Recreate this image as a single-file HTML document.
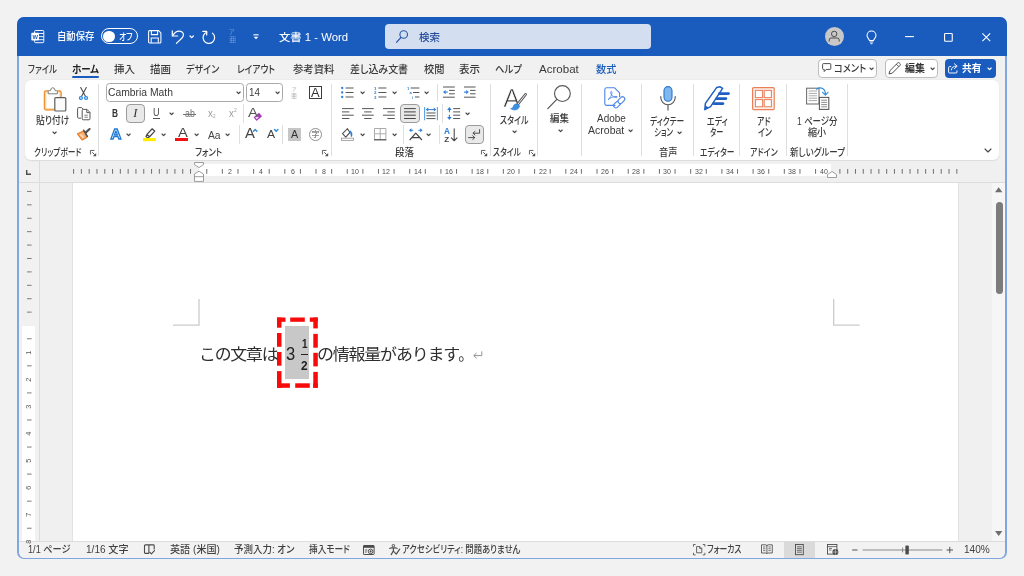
<!DOCTYPE html><html lang="ja"><head><meta charset="utf-8"><title>文書 1 - Word</title><style>
html,body{margin:0;padding:0}
body{width:1024px;height:576px;overflow:hidden;background:#f2f2f2;position:relative;font-family:"Liberation Sans","Noto Sans CJK JP",sans-serif;}
.t{position:absolute;white-space:nowrap;transform-origin:0 50%;font-feature-settings:"palt";line-height:1;z-index:3;}
svg{overflow:visible}
</style></head><body>
<div style="position:absolute;left:17.4px;top:17px;width:989.2px;height:542px;border-radius:7px;overflow:hidden;background:#82a6df;"><div style="position:absolute;left:-17.4px;top:-17px;width:1024px;height:576px;will-change:transform;">
<div style="position:absolute;left:18.6px;top:55px;width:986.8px;height:502.8px;background:#f1f1f1;border-radius:0 0 6px 6px;"></div>
<div style="position:absolute;left:17px;top:17px;width:990px;height:38.5px;background:#1a5cbe;"></div>
<div style="position:absolute;left:385.2px;top:24.3px;width:265.5px;height:25px;background:#d3dff1;border-radius:4px;"></div>
<div style="position:absolute;left:25px;top:80.4px;width:973.5px;height:79.9px;background:#fff;border-radius:6px;box-shadow:0 0.5px 1.5px rgba(0,0,0,0.10);"></div>
<div style="position:absolute;left:39.4px;top:160.6px;width:966px;height:381px;background:#f0f0f0;"></div>
<div style="position:absolute;left:198.8px;top:164px;width:632.4px;height:12.3px;background:#fff;"></div>
<div style="position:absolute;left:18.6px;top:181.9px;width:986.8px;height:1px;background:#dcdcdc;"></div>
<div style="position:absolute;left:73.2px;top:182.9px;width:885.3px;height:359px;background:#fff;box-shadow:0 0 0 0.8px #dedede;"></div>
<div style="position:absolute;left:21.6px;top:326px;width:13px;height:215px;background:#fff;"></div>
<div style="position:absolute;left:39px;top:161px;width:1px;height:380px;background:#dcdcdc;"></div>
<div style="position:absolute;left:992px;top:182.9px;width:13.4px;height:359px;background:#f6f6f6;"></div>
<div style="position:absolute;left:995.6px;top:202.2px;width:7px;height:91.8px;background:#7c7c7c;border-radius:3.5px;"></div>
<svg style="position:absolute;left:995.1px;top:186.6px;" width="7.4" height="5.2" viewBox="0 0 7.4 5.2" fill="none"><path d="M0 5.2 L3.7 0.3 L7.4 5.2 Z" fill="#6e6e6e"/></svg>
<svg style="position:absolute;left:995.1px;top:531.4px;" width="7.4" height="5.2" viewBox="0 0 7.4 5.2" fill="none"><path d="M0 0 L3.7 4.9 L7.4 0 Z" fill="#6e6e6e"/></svg>
<div style="position:absolute;left:18.6px;top:541px;width:986.8px;height:16.8px;background:#f2f2f2;border-top:1px solid #dcdcdc;border-radius:0 0 6px 6px;box-sizing:border-box;"></div>
<div style="position:absolute;left:783.8px;top:541.8px;width:31.6px;height:16px;background:#dadada;"></div>
<span class="t" style="left:57.3px;top:32.10px;font-size:10.2px;color:#ffffff;font-weight:500;transform:scaleX(0.9202);">自動保存</span>
<span class="t" style="left:119px;top:32.25px;font-size:9.5px;color:#ffffff;font-weight:500;transform:scaleX(0.8090);">オフ</span>
<span class="t" style="left:278.6px;top:32.05px;font-size:10.5px;color:#ffffff;font-weight:500;transform:scaleX(1.0800);">文書 1 - Word</span>
<span class="t" style="left:419px;top:32.05px;font-size:10.5px;color:#23499a;font-weight:500;">検索</span>
<span class="t" style="left:27.8px;top:64.15px;font-size:10.5px;color:#3a3a3a;font-weight:500;transform:scaleX(0.7945);">ファイル</span>
<span class="t" style="left:113.6px;top:64.15px;font-size:10.5px;color:#3a3a3a;font-weight:500;transform:scaleX(0.9952);">挿入</span>
<span class="t" style="left:149.7px;top:64.15px;font-size:10.5px;color:#3a3a3a;font-weight:500;transform:scaleX(0.9952);">描画</span>
<span class="t" style="left:186.3px;top:64.15px;font-size:10.5px;color:#3a3a3a;font-weight:500;transform:scaleX(0.8627);">デザイン</span>
<span class="t" style="left:236.9px;top:64.15px;font-size:10.5px;color:#3a3a3a;font-weight:500;transform:scaleX(0.8292);">レイアウト</span>
<span class="t" style="left:293.2px;top:64.15px;font-size:10.5px;color:#3a3a3a;font-weight:500;transform:scaleX(0.9857);">参考資料</span>
<span class="t" style="left:349.9px;top:64.15px;font-size:10.5px;color:#3a3a3a;font-weight:500;transform:scaleX(0.9500);">差し込み文書</span>
<span class="t" style="left:423.7px;top:64.15px;font-size:10.5px;color:#3a3a3a;font-weight:500;transform:scaleX(0.9714);">校閲</span>
<span class="t" style="left:459.2px;top:64.15px;font-size:10.5px;color:#3a3a3a;font-weight:500;transform:scaleX(1.0048);">表示</span>
<span class="t" style="left:495px;top:64.15px;font-size:10.5px;color:#3a3a3a;font-weight:500;transform:scaleX(0.8963);">ヘルプ</span>
<span class="t" style="left:538.9px;top:64.15px;font-size:10.5px;color:#3a3a3a;font-weight:500;transform:scaleX(1.0998);">Acrobat</span>
<span class="t" style="left:71.9px;top:64.15px;font-size:10.5px;color:#222;font-weight:700;transform:scaleX(0.9009);">ホーム</span>
<div style="position:absolute;left:72px;top:76px;width:27px;height:2px;background:#1a5cbe;border-radius:1px;"></div>
<span class="t" style="left:595.8px;top:64.15px;font-size:10.5px;color:#1a5cbe;font-weight:500;transform:scaleX(0.9714);">数式</span>
<div style="position:absolute;left:817.8px;top:58.8px;width:59.6px;height:18.8px;background:#fff;border:1px solid #bdbdbd;border-radius:4px;box-sizing:border-box;"></div>
<div style="position:absolute;left:884.6px;top:58.8px;width:53.2px;height:18.8px;background:#fff;border:1px solid #bdbdbd;border-radius:4px;box-sizing:border-box;"></div>
<div style="position:absolute;left:944.8px;top:58.8px;width:51.2px;height:18.8px;background:#1a5cbe;border-radius:4px;"></div>
<span class="t" style="left:833.8px;top:63.15px;font-size:10.5px;color:#3a3a3a;font-weight:500;transform:scaleX(0.8807);">コメント</span>
<span class="t" style="left:904.6px;top:63.15px;font-size:10.5px;color:#333;font-weight:700;transform:scaleX(0.9476);">編集</span>
<span class="t" style="left:962px;top:63.15px;font-size:10.5px;color:#ffffff;font-weight:700;transform:scaleX(0.9286);">共有</span>
<span class="t" style="left:36px;top:115.15px;font-size:10.5px;color:#3a3a3a;font-weight:500;transform:scaleX(0.8353);">貼り付け</span>
<span class="t" style="left:33.9px;top:147.50px;font-size:10px;color:#3a3a3a;font-weight:500;transform:scaleX(0.7718);">クリップボード</span>
<span class="t" style="left:108.3px;top:87.35px;font-size:10.5px;color:#3a3a3a;font-weight:500;transform:scaleX(0.9840);">Cambria Math</span>
<span class="t" style="left:248.5px;top:87.35px;font-size:10.5px;color:#3a3a3a;font-weight:500;transform:scaleX(0.9326);">14</span>
<span class="t" style="left:195.3px;top:147.50px;font-size:10px;color:#3a3a3a;font-weight:500;transform:scaleX(0.8275);">フォント</span>
<span class="t" style="left:395px;top:147.50px;font-size:10px;color:#3a3a3a;font-weight:500;transform:scaleX(0.9450);">段落</span>
<span class="t" style="left:499.7px;top:114.75px;font-size:10.5px;color:#3a3a3a;font-weight:500;transform:scaleX(0.7559);">スタイル</span>
<span class="t" style="left:493.4px;top:147.50px;font-size:10px;color:#3a3a3a;font-weight:500;transform:scaleX(0.7798);">スタイル</span>
<span class="t" style="left:550.3px;top:112.75px;font-size:10.5px;color:#3a3a3a;font-weight:500;transform:scaleX(0.9000);">編集</span>
<span class="t" style="left:597.2px;top:113.35px;font-size:10.5px;color:#3a3a3a;font-weight:500;transform:scaleX(0.9481);">Adobe</span>
<span class="t" style="left:588.1px;top:125.15px;font-size:10.5px;color:#3a3a3a;font-weight:500;">Acrobat</span>
<span class="t" style="left:650.4px;top:116.05px;font-size:10.5px;color:#3a3a3a;font-weight:500;transform:scaleX(0.7374);">ディクテー</span>
<span class="t" style="left:654px;top:126.95px;font-size:10.5px;color:#3a3a3a;font-weight:500;transform:scaleX(0.7078);">ション</span>
<span class="t" style="left:658.6px;top:147.50px;font-size:10px;color:#3a3a3a;font-weight:500;transform:scaleX(0.9200);">音声</span>
<span class="t" style="left:707.3px;top:116.05px;font-size:10.5px;color:#3a3a3a;font-weight:500;transform:scaleX(0.7588);">エディ</span>
<span class="t" style="left:710.4px;top:126.55px;font-size:10.5px;color:#3a3a3a;font-weight:500;transform:scaleX(0.6758);">ター</span>
<span class="t" style="left:700px;top:147.50px;font-size:10px;color:#3a3a3a;font-weight:500;transform:scaleX(0.7717);">エディター</span>
<span class="t" style="left:757px;top:115.55px;font-size:10.5px;color:#3a3a3a;font-weight:500;transform:scaleX(0.7461);">アド</span>
<span class="t" style="left:757.5px;top:126.55px;font-size:10.5px;color:#3a3a3a;font-weight:500;transform:scaleX(0.7482);">イン</span>
<span class="t" style="left:749.8px;top:147.50px;font-size:10px;color:#3a3a3a;font-weight:500;transform:scaleX(0.7903);">アドイン</span>
<span class="t" style="left:796.7px;top:115.55px;font-size:10.5px;color:#3a3a3a;font-weight:500;transform:scaleX(0.8062);">1 ページ分</span>
<span class="t" style="left:808.4px;top:126.55px;font-size:10.5px;color:#3a3a3a;font-weight:500;transform:scaleX(0.8619);">縮小</span>
<span class="t" style="left:789.5px;top:147.50px;font-size:10px;color:#3a3a3a;font-weight:500;transform:scaleX(0.8492);">新しいグループ</span>
<span class="t" style="left:27.6px;top:544.90px;font-size:10px;color:#404040;font-weight:500;transform:scaleX(0.9158);">1/1 ページ</span>
<span class="t" style="left:86px;top:544.90px;font-size:10px;color:#404040;font-weight:500;transform:scaleX(1.0059);">1/16 文字</span>
<span class="t" style="left:169.9px;top:544.90px;font-size:10px;color:#404040;font-weight:500;transform:scaleX(1.0111);">英語 (米国)</span>
<span class="t" style="left:233.5px;top:544.90px;font-size:10px;color:#404040;font-weight:500;transform:scaleX(0.9488);">予測入力: オン</span>
<span class="t" style="left:309.1px;top:544.90px;font-size:10px;color:#404040;font-weight:500;transform:scaleX(0.8672);">挿入モード</span>
<span class="t" style="left:402.3px;top:544.90px;font-size:10px;color:#404040;font-weight:500;transform:scaleX(0.8361);">アクセシビリティ: 問題ありません</span>
<span class="t" style="left:707.4px;top:544.90px;font-size:10px;color:#404040;font-weight:500;transform:scaleX(0.7794);">フォーカス</span>
<span class="t" style="left:964.2px;top:544.90px;font-size:10px;color:#404040;font-weight:500;transform:scaleX(1.0087);">140%</span>
<span class="t" style="left:199.4px;top:346.90px;font-size:15.4px;color:#2e2e2e;transform:scaleX(1.0970);font-feature-settings:normal;letter-spacing:-1.1px;">この文章は</span>
<span class="t" style="left:317.0px;top:346.90px;font-size:15.4px;color:#2e2e2e;transform:scaleX(1.1040);font-feature-settings:normal;letter-spacing:-1.1px;">の情報量があります</span>
<span class="t" style="left:458.2px;top:346.70px;font-size:15.4px;color:#2e2e2e;font-feature-settings:normal;letter-spacing:-1.1px;">。</span>
<svg style="position:absolute;left:31px;top:30px;" width="13.4" height="13.4" viewBox="0 0 13.4 13.4" fill="none"><rect x="3.6" y="0.5" width="9.2" height="12.2" rx="0.9" fill="none" stroke="#fff" stroke-width="0.95"/><path d="M8 3.5 H12.6 M8 6.6 H12.6 M8 9.7 H12.6" stroke="#fff" stroke-width="0.9"/><rect x="0.3" y="2.7" width="7.7" height="7.7" rx="0.7" fill="#fff"/><text x="4.15" y="8.7" font-family="Liberation Sans,sans-serif" font-size="5.8" font-weight="700" fill="#1a5cbe" text-anchor="middle">W</text></svg>
<div style="position:absolute;left:100.6px;top:28px;width:37.4px;height:16.2px;border:1.1px solid #fff;border-radius:8.1px;box-sizing:border-box;"></div>
<div style="position:absolute;left:103.4px;top:30.6px;width:11.2px;height:11.2px;background:#fff;border-radius:50%;"></div>
<svg style="position:absolute;left:148px;top:30px;" width="13.5" height="13.5" viewBox="0 0 13.5 13.5" fill="none"><path d="M0.6 1.6 a1 1 0 0 1 1-1 H10.6 L12.9 2.9 V11.9 a1 1 0 0 1 -1 1 H1.6 a1 1 0 0 1 -1 -1 Z" stroke="#fff" stroke-width="1.05"/><path d="M3.4 0.8 V4.6 H9.6 V0.8 M3.2 12.8 V8 H10.3 V12.8" stroke="#fff" stroke-width="1.05"/></svg>
<svg style="position:absolute;left:171px;top:29.5px;" width="14" height="14.5" viewBox="0 0 14 14.5" fill="none"><path d="M1.3 0.9 V6 H6.7" stroke="#fff" stroke-width="1.2" stroke-linecap="round" stroke-linejoin="round"/><path d="M1.7 5.7 C3.4 2.6 6.2 0.9 8.8 1.1 C12.6 1.4 13.6 5.4 11 8 L5.4 13.4" stroke="#fff" stroke-width="1.2" stroke-linecap="round"/></svg>
<svg style="position:absolute;left:189.5px;top:35.75px;" width="3.4" height="1.7" viewBox="0 0 3.4 1.7" fill="none"><path d="M0 0 L1.7 1.7 L3.4 0" stroke="#fff" stroke-width="1.2" stroke-linecap="round" stroke-linejoin="round"/></svg>
<svg style="position:absolute;left:202px;top:29.6px;" width="14" height="14" viewBox="0 0 14 14" fill="none"><path d="M4.7 2.2 A5.8 5.8 0 1 0 10.5 3.1" stroke="#fff" stroke-width="1.2" stroke-linecap="round"/><path d="M0.8 1.4 H4.7 V5" stroke="#fff" stroke-width="1.2" stroke-linecap="round" stroke-linejoin="round"/></svg>
<span class="t" style="left:229.4px;top:30.45px;font-size:5.5px;color:#6f98d8;transform:scaleX(1.0927);">ア</span>
<span class="t" style="left:229.2px;top:36.90px;font-size:6.6px;color:#6f98d8;transform:scaleX(1.1071);">亜</span>
<svg style="position:absolute;left:252.6px;top:34.4px;" width="6" height="6" viewBox="0 0 6 6" fill="none"><path d="M0.4 0.8 H5.6" stroke="#fff" stroke-width="1.1"/><path d="M0.6 2.8 L3 5.2 L5.4 2.8 Z" fill="#fff"/></svg>
<svg style="position:absolute;left:395.8px;top:30.4px;" width="12.4" height="13.4" viewBox="0 0 12.4 13.4" fill="none"><circle cx="7.7" cy="4.5" r="3.8" stroke="#2a55a6" stroke-width="1.15"/><path d="M5 7.4 L0.7 12.2" stroke="#2a55a6" stroke-width="1.3" stroke-linecap="round"/></svg>
<div style="position:absolute;left:824.6px;top:27px;width:19.2px;height:19.2px;background:#c8c8c8;border-radius:50%;"></div>
<svg style="position:absolute;left:828px;top:30.2px;" width="12.4" height="12.6" viewBox="0 0 12.4 12.6" fill="none"><circle cx="6.2" cy="3.9" r="2.7" stroke="#4a4a4a" stroke-width="1"/><path d="M1.2 11.6 V10 a2 2 0 0 1 2 -2 H9.2 a2 2 0 0 1 2 2 V11.6" stroke="#4a4a4a" stroke-width="1"/></svg>
<svg style="position:absolute;left:866.4px;top:30.6px;" width="11" height="13.6" viewBox="0 0 11 13.6" fill="none"><path d="M3.4 9.6 C3.4 8 1 7 1 4.6 A4.5 4.5 0 0 1 10 4.6 C10 7 7.6 8 7.6 9.6 Z" stroke="#fff" stroke-width="1.05" stroke-linejoin="round"/><path d="M3.7 11 H7.3 M4.5 12.7 H6.5" stroke="#fff" stroke-width="1"/></svg>
<svg style="position:absolute;left:905px;top:36px;" width="9" height="1.2" viewBox="0 0 9 1.2" fill="none"><path d="M0 0.6 H9" stroke="#fff" stroke-width="1.1"/></svg>
<svg style="position:absolute;left:943.6px;top:32.8px;" width="8.8" height="8.8" viewBox="0 0 8.8 8.8" fill="none"><rect x="0.55" y="0.55" width="7.7" height="7.7" rx="0.7" stroke="#fff" stroke-width="1.1"/></svg>
<svg style="position:absolute;left:982.4px;top:32.8px;" width="8.6" height="8.6" viewBox="0 0 8.6 8.6" fill="none"><path d="M0.4 0.4 L8.2 8.2 M8.2 0.4 L0.4 8.2" stroke="#fff" stroke-width="1.1"/></svg>
<svg style="position:absolute;left:822px;top:63px;" width="9.4" height="9.4" viewBox="0 0 9.4 9.4" fill="none"><path d="M0.6 1.4 a0.8 0.8 0 0 1 0.8 -0.8 H8 a0.8 0.8 0 0 1 0.8 0.8 V5.6 a0.8 0.8 0 0 1 -0.8 0.8 H4.2 L2.2 8.6 V6.4 H1.4 a0.8 0.8 0 0 1 -0.8 -0.8 Z" stroke="#444" stroke-width="0.95" stroke-linejoin="round"/></svg>
<svg style="position:absolute;left:869.8px;top:67.8px;" width="3.2" height="1.6" viewBox="0 0 3.2 1.6" fill="none"><path d="M0 0 L1.6 1.6 L3.2 0" stroke="#444" stroke-width="1.15" stroke-linecap="round" stroke-linejoin="round"/></svg>
<svg style="position:absolute;left:888px;top:62px;" width="13" height="13" viewBox="0 0 13 13" fill="none"><path d="M1 12 L1.9 8.7 L9.6 1 a1.2 1.2 0 0 1 1.7 0 L12 1.7 a1.2 1.2 0 0 1 0 1.7 L4.3 11.1 Z M8.4 2.2 L10.8 4.6" stroke="#444" stroke-width="0.95" stroke-linejoin="round"/></svg>
<svg style="position:absolute;left:931.4px;top:67.8px;" width="3.2" height="1.6" viewBox="0 0 3.2 1.6" fill="none"><path d="M0 0 L1.6 1.6 L3.2 0" stroke="#444" stroke-width="1.15" stroke-linecap="round" stroke-linejoin="round"/></svg>
<svg style="position:absolute;left:948px;top:63px;" width="10.4" height="10.6" viewBox="0 0 10.4 10.6" fill="none"><path d="M3.2 3.6 H1.6 a1 1 0 0 0 -1 1 V9 a1 1 0 0 0 1 1 H8 a1 1 0 0 0 1 -1 V7.4" stroke="#fff" stroke-width="0.95"/><path d="M3.4 7 C3.6 4.4 5.4 3.2 8 3.2 M6.4 0.8 L9.2 3.2 L6.4 5.6" stroke="#fff" stroke-width="0.95" stroke-linecap="round" stroke-linejoin="round"/></svg>
<svg style="position:absolute;left:988.0px;top:67.8px;" width="3.2" height="1.6" viewBox="0 0 3.2 1.6" fill="none"><path d="M0 0 L1.6 1.6 L3.2 0" stroke="#fff" stroke-width="1.15" stroke-linecap="round" stroke-linejoin="round"/></svg>
<svg style="position:absolute;left:44px;top:86.6px;" width="22.4" height="24.6" viewBox="0 0 22.4 24.6" fill="none"><path d="M4.6 4.4 H2.4 a1.4 1.4 0 0 0 -1.4 1.4 V21 a1.4 1.4 0 0 0 1.4 1.4 H10.4 M13.2 4.4 H15.2 a1.4 1.4 0 0 1 1.4 1.4 V10" stroke="#fbdcb6" stroke-width="2.8"/><path d="M4.6 3.8 H2.2 a1.7 1.7 0 0 0 -1.7 1.7 V21.2 a1.7 1.7 0 0 0 1.7 1.7 H10.4 M13.2 3.8 H15.4 a1.7 1.7 0 0 1 1.7 1.7 V10" stroke="#ec9433" stroke-width="1.25"/><path d="M4.2 6.8 V4.6 Q4.2 3.7 5.2 3.7 H6.4 Q6.9 0.7 8.8 0.7 Q10.7 0.7 11.2 3.7 H12.4 Q13.4 3.7 13.4 4.6 V6.8 Z" stroke="#7c7c7c" stroke-width="1" fill="#fdfdfd" stroke-linejoin="round"/><rect x="10.8" y="10.6" width="11" height="13.4" rx="1" fill="#fbfbfb" stroke="#5c5c5c" stroke-width="1.2"/></svg>
<svg style="position:absolute;left:52.5px;top:131.79999999999998px;" width="3.2" height="1.6" viewBox="0 0 3.2 1.6" fill="none"><path d="M0 0 L1.6 1.6 L3.2 0" stroke="#444" stroke-width="1.15" stroke-linecap="round" stroke-linejoin="round"/></svg>
<svg style="position:absolute;left:79.4px;top:86.6px;" width="9" height="13.2" viewBox="0 0 9 13.2" fill="none"><path d="M1.7 0.5 L6.4 9.2 M7.3 0.5 L2.6 9.2" stroke="#484848" stroke-width="1.05" stroke-linecap="round"/><circle cx="1.9" cy="11" r="1.5" fill="#b9dcf7" stroke="#2b8adf" stroke-width="1.2"/><circle cx="7.1" cy="11" r="1.5" fill="#b9dcf7" stroke="#2b8adf" stroke-width="1.2"/></svg>
<svg style="position:absolute;left:76.8px;top:107px;" width="13.6" height="13.2" viewBox="0 0 13.6 13.2" fill="none"><path d="M4 11.2 H1.6 a1 1 0 0 1 -1 -1 V1.6 a1 1 0 0 1 1 -1 H4.6 L6.2 2.2" stroke="#555" stroke-width="1"/><path d="M5.2 3.4 a1 1 0 0 1 1 -1 H10 L13 5.4 V11.8 a1 1 0 0 1 -1 1 H6.2 a1 1 0 0 1 -1 -1 Z M9.8 2.6 V5.6 H12.8" stroke="#555" stroke-width="1" stroke-linejoin="round"/><path d="M7.4 8.2 H10.8 M7.4 10.2 H10.8" stroke="#6a6a6a" stroke-width="0.85"/></svg>
<svg style="position:absolute;left:76.8px;top:128px;" width="13.6" height="12.8" viewBox="0 0 13.6 12.8" fill="none"><path d="M0.5 5.8 L7.3 2.9 L9.7 9.5 L5.1 12 Z" fill="#f6b278" stroke="#ec7a1c" stroke-width="1.2" stroke-linejoin="round"/><path d="M3.4 6.6 L6.4 9.6" stroke="#fde3c9" stroke-width="1.4"/><path d="M6.6 2.2 L10.4 8.4" stroke="#505050" stroke-width="1.5" stroke-linecap="round"/><path d="M8.6 4.6 L12.6 1" stroke="#505050" stroke-width="2.1" stroke-linecap="round"/></svg>
<svg style="position:absolute;left:89.8px;top:149.8px;" width="6.4" height="6.4" viewBox="0 0 6.4 6.4" fill="none"><path d="M0.45 4.4 V0.45 H4.4" stroke="#505050" stroke-width="0.9"/><path d="M2.3 2.3 L4.6 4.6" stroke="#505050" stroke-width="1"/><path d="M6.2 2.9 V6.2 H2.9 Z" fill="#505050"/></svg>
<div style="position:absolute;left:98.2px;top:84px;width:1px;height:71.6px;background:#dedede;"></div>
<div style="position:absolute;left:105.5px;top:83.4px;width:138.2px;height:19px;border:1px solid #a9a9a9;border-radius:3.5px;box-sizing:border-box;background:#fff;"></div>
<svg style="position:absolute;left:237.0px;top:92.2px;" width="3.2" height="1.6" viewBox="0 0 3.2 1.6" fill="none"><path d="M0 0 L1.6 1.6 L3.2 0" stroke="#444" stroke-width="1.15" stroke-linecap="round" stroke-linejoin="round"/></svg>
<div style="position:absolute;left:246.2px;top:83.4px;width:37.2px;height:19px;border:1px solid #a9a9a9;border-radius:3.5px;box-sizing:border-box;background:#fff;"></div>
<svg style="position:absolute;left:276.4px;top:92.2px;" width="3.2" height="1.6" viewBox="0 0 3.2 1.6" fill="none"><path d="M0 0 L1.6 1.6 L3.2 0" stroke="#444" stroke-width="1.15" stroke-linecap="round" stroke-linejoin="round"/></svg>
<span class="t" style="left:291.6px;top:87.10px;font-size:5px;color:#bcbcbc;font-weight:500;transform:scaleX(0.9879);">ア</span>
<span class="t" style="left:291.3px;top:92.90px;font-size:6.2px;color:#bcbcbc;font-weight:500;transform:scaleX(0.9859);">亜</span>
<div style="position:absolute;left:308.8px;top:86.3px;width:13.2px;height:12.8px;border:1.2px solid #3a3a3a;box-sizing:border-box;"></div>
<span class="t" style="left:311.4px;top:86.50px;font-size:12.4px;color:#333;transform:scaleX(1.0405);">A</span>
<span class="t" style="left:112.4px;top:107.80px;font-size:11.4px;color:#333;font-weight:700;transform:scaleX(0.7287);">B</span>
<div style="position:absolute;left:126.3px;top:104.2px;width:19px;height:19px;background:#e9e9e9;border:1.2px solid #9c9c9c;border-radius:4px;box-sizing:border-box;"></div>
<span class="t" style="left:133.2px;top:107.30px;font-size:12.4px;color:#333;font-family:'Liberation Serif',serif;font-style:italic;">I</span>
<span class="t" style="left:153.2px;top:108.30px;font-size:10.2px;color:#4a4a4a;font-weight:500;transform:scaleX(0.8968);">U</span>
<div style="position:absolute;left:153px;top:117.7px;width:7px;height:0.9px;background:#555;"></div>
<svg style="position:absolute;left:169.8px;top:112.9px;" width="3.2" height="1.6" viewBox="0 0 3.2 1.6" fill="none"><path d="M0 0 L1.6 1.6 L3.2 0" stroke="#444" stroke-width="1.15" stroke-linecap="round" stroke-linejoin="round"/></svg>
<span class="t" style="left:185.2px;top:108.90px;font-size:10px;color:#707070;font-weight:500;transform:scaleX(0.8809);">ab</span>
<div style="position:absolute;left:183.4px;top:114px;width:13px;height:0.9px;background:#777;"></div>
<span class="t" style="left:208px;top:108.90px;font-size:10.4px;color:#9c9c9c;font-weight:500;transform:scaleX(0.9225);">x</span>
<span class="t" style="left:213.4px;top:114.40px;font-size:5px;color:#a2a2a2;font-weight:500;transform:scaleX(0.9348);">2</span>
<span class="t" style="left:228.7px;top:108.90px;font-size:10.4px;color:#9c9c9c;font-weight:500;transform:scaleX(0.9225);">x</span>
<span class="t" style="left:234.4px;top:107.60px;font-size:5px;color:#a2a2a2;font-weight:500;transform:scaleX(1.0067);">2</span>
<div style="position:absolute;left:242.6px;top:104.4px;width:1px;height:18.599999999999994px;background:#dedede;"></div>
<span class="t" style="left:248.1px;top:106.20px;font-size:13.4px;color:#555;transform:scaleX(1.1077);">A</span>
<svg style="position:absolute;left:252.6px;top:111.6px;" width="9.6" height="9.6" viewBox="0 0 9.6 9.6" fill="none"><g transform="rotate(-40 4.8 4.8)"><rect x="1.2" y="2.5" width="7.2" height="4.6" rx="0.6" fill="#a63bb8"/><rect x="2.4" y="3.7" width="2.6" height="2.2" fill="#f3d9f7"/></g></svg>
<svg style="position:absolute;left:109.6px;top:128px;" width="12" height="12" viewBox="0 0 12 12" fill="none"><text x="6" y="11.4" text-anchor="middle" font-family="Liberation Sans,sans-serif" font-weight="700" font-size="15" fill="#f4f9ff" stroke="#1f78d6" stroke-width="1.3">A</text></svg>
<svg style="position:absolute;left:126.9px;top:134.4px;" width="3.2" height="1.6" viewBox="0 0 3.2 1.6" fill="none"><path d="M0 0 L1.6 1.6 L3.2 0" stroke="#444" stroke-width="1.15" stroke-linecap="round" stroke-linejoin="round"/></svg>
<svg style="position:absolute;left:142.5px;top:127.6px;" width="13" height="13.4" viewBox="0 0 13 13.4" fill="none"><path d="M4 6.4 L9.2 0.8 L11.8 3.2 L6.6 8.8 Z M4 6.4 L3 8.6 L4.6 9.8 L6.6 8.8" stroke="#484848" stroke-width="1.25" stroke-linejoin="round"/><rect x="0" y="10" width="12.8" height="3.2" fill="#ffee00"/></svg>
<svg style="position:absolute;left:161.70000000000002px;top:134.4px;" width="3.2" height="1.6" viewBox="0 0 3.2 1.6" fill="none"><path d="M0 0 L1.6 1.6 L3.2 0" stroke="#444" stroke-width="1.15" stroke-linecap="round" stroke-linejoin="round"/></svg>
<span class="t" style="left:177.6px;top:127.10px;font-size:12.2px;color:#444;font-weight:500;transform:scaleX(1.2038);">A</span>
<div style="position:absolute;left:175.2px;top:137.7px;width:13px;height:3px;background:#f21212;"></div>
<svg style="position:absolute;left:195.1px;top:134.4px;" width="3.2" height="1.6" viewBox="0 0 3.2 1.6" fill="none"><path d="M0 0 L1.6 1.6 L3.2 0" stroke="#444" stroke-width="1.15" stroke-linecap="round" stroke-linejoin="round"/></svg>
<span class="t" style="left:208.4px;top:129.85px;font-size:10.5px;color:#444;font-weight:500;transform:scaleX(0.9810);">Aa</span>
<svg style="position:absolute;left:226.20000000000002px;top:134.4px;" width="3.2" height="1.6" viewBox="0 0 3.2 1.6" fill="none"><path d="M0 0 L1.6 1.6 L3.2 0" stroke="#444" stroke-width="1.15" stroke-linecap="round" stroke-linejoin="round"/></svg>
<div style="position:absolute;left:238.5px;top:125.4px;width:1px;height:18.400000000000006px;background:#dedede;"></div>
<span class="t" style="left:244.8px;top:126.40px;font-size:14.4px;color:#444;transform:scaleX(1.0302);">A</span>
<svg style="position:absolute;left:252.9px;top:128.8px;" width="4.4" height="2.6" viewBox="0 0 4.4 2.6" fill="none"><path d="M0.5 2.2 L2.2 0.5 L3.9 2.2" stroke="#2b88d8" stroke-width="1.4" stroke-linecap="round" stroke-linejoin="round"/></svg>
<span class="t" style="left:267px;top:128.70px;font-size:11.8px;color:#444;transform:scaleX(1.0286);">A</span>
<svg style="position:absolute;left:274px;top:128.9px;" width="4.4" height="2.6" viewBox="0 0 4.4 2.6" fill="none"><path d="M0.5 0.5 L2.2 2.2 L3.9 0.5" stroke="#2b88d8" stroke-width="1.4" stroke-linecap="round" stroke-linejoin="round"/></svg>
<div style="position:absolute;left:282.3px;top:125.4px;width:1px;height:18.400000000000006px;background:#dedede;"></div>
<div style="position:absolute;left:288.2px;top:128.2px;width:12.8px;height:12.7px;background:#c6c6c6;"></div>
<span class="t" style="left:291px;top:128.70px;font-size:11.4px;color:#333;transform:scaleX(0.9462);">A</span>
<div style="position:absolute;left:309px;top:128.2px;width:12.8px;height:12.8px;border:1px solid #909090;border-radius:50%;box-sizing:border-box;"></div>
<span class="t" style="left:311.4px;top:130.60px;font-size:8px;color:#808080;font-weight:500;">字</span>
<svg style="position:absolute;left:321.8px;top:149.8px;" width="6.4" height="6.4" viewBox="0 0 6.4 6.4" fill="none"><path d="M0.45 4.4 V0.45 H4.4" stroke="#505050" stroke-width="0.9"/><path d="M2.3 2.3 L4.6 4.6" stroke="#505050" stroke-width="1"/><path d="M6.2 2.9 V6.2 H2.9 Z" fill="#505050"/></svg>
<div style="position:absolute;left:330.7px;top:84px;width:1px;height:71.6px;background:#dedede;"></div>
<svg style="position:absolute;left:340.8px;top:86px;" width="12.8" height="13" viewBox="0 0 12.8 13" fill="none"><circle cx="1.2" cy="2" r="1.15" fill="#2b7cd3"/><circle cx="1.2" cy="6.5" r="1.15" fill="#2b7cd3"/><circle cx="1.2" cy="11" r="1.15" fill="#2b7cd3"/><path d="M4.6 2 H12.6 M4.6 6.5 H12.6 M4.6 11 H12.6 " stroke="#555" stroke-width="1.0"/></svg>
<svg style="position:absolute;left:360.79999999999995px;top:92.2px;" width="3.2" height="1.6" viewBox="0 0 3.2 1.6" fill="none"><path d="M0 0 L1.6 1.6 L3.2 0" stroke="#444" stroke-width="1.15" stroke-linecap="round" stroke-linejoin="round"/></svg>
<svg style="position:absolute;left:373.6px;top:86px;" width="12.6" height="13" viewBox="0 0 12.6 13" fill="none"><text x="0" y="3.6" font-family="Liberation Sans,sans-serif" font-size="4.4" font-weight="700" fill="#2b7cd3">1</text><text x="0" y="8.1" font-family="Liberation Sans,sans-serif" font-size="4.4" font-weight="700" fill="#2b7cd3">2</text><text x="0" y="12.6" font-family="Liberation Sans,sans-serif" font-size="4.4" font-weight="700" fill="#2b7cd3">3</text><path d="M4.4 2 H12.4 M4.4 6.5 H12.4 M4.4 11 H12.4 " stroke="#555" stroke-width="1.0"/></svg>
<svg style="position:absolute;left:393.4px;top:92.2px;" width="3.2" height="1.6" viewBox="0 0 3.2 1.6" fill="none"><path d="M0 0 L1.6 1.6 L3.2 0" stroke="#444" stroke-width="1.15" stroke-linecap="round" stroke-linejoin="round"/></svg>
<svg style="position:absolute;left:406.7px;top:86px;" width="12.6" height="13" viewBox="0 0 12.6 13" fill="none"><text x="0" y="3.6" font-family="Liberation Sans,sans-serif" font-size="4.2" font-weight="700" fill="#2b7cd3">1</text><text x="2.4" y="8.1" font-family="Liberation Sans,sans-serif" font-size="4.2" font-weight="700" fill="#2b7cd3">a</text><text x="5" y="12.6" font-family="Liberation Sans,sans-serif" font-size="4.2" font-weight="700" fill="#2b7cd3">i</text><path d="M3.6 2 H12.4 M6 6.5 H12.4 M8 11 H12.4 " stroke="#555" stroke-width="1.0"/></svg>
<svg style="position:absolute;left:424.59999999999997px;top:92.2px;" width="3.2" height="1.6" viewBox="0 0 3.2 1.6" fill="none"><path d="M0 0 L1.6 1.6 L3.2 0" stroke="#444" stroke-width="1.15" stroke-linecap="round" stroke-linejoin="round"/></svg>
<div style="position:absolute;left:436.9px;top:83.6px;width:1px;height:17.80000000000001px;background:#dedede;"></div>
<svg style="position:absolute;left:443.3px;top:86.4px;" width="12" height="12" viewBox="0 0 12 12" fill="none"><path d="M0 1 H11.8 M6 4.4 H11.8 M6 7.8 H11.8 M0 11.2 H11.8 " stroke="#555" stroke-width="1.0"/><path d="M0 6.1 L2.6 3.9 V8.3 Z" fill="#2b7cd3"/><path d="M2.4 6.1 H4.8" stroke="#2b7cd3" stroke-width="1.1"/></svg>
<svg style="position:absolute;left:464.4px;top:86.4px;" width="12" height="12" viewBox="0 0 12 12" fill="none"><path d="M0 1 H11.6 M6 4.4 H11.6 M6 7.8 H11.6 M0 11.2 H11.6 " stroke="#555" stroke-width="1.0"/><path d="M4.8 6.1 L2.2 3.9 V8.3 Z" fill="#2b7cd3"/><path d="M0 6.1 H2.4" stroke="#2b7cd3" stroke-width="1.1"/></svg>
<svg style="position:absolute;left:341.6px;top:107.8px;" width="12" height="11.2" viewBox="0 0 12 11.2" fill="none"><path d="M0 0.6 H11.8 M0 3.9 H7.4 M0 7.2 H11.8 M0 10.5 H7.4 " stroke="#555" stroke-width="1.0"/></svg>
<svg style="position:absolute;left:362.4px;top:107.8px;" width="12" height="11.2" viewBox="0 0 12 11.2" fill="none"><path d="M0 0.6 H11.8 M2.2 3.9 H9.6 M0 7.2 H11.8 M2.2 10.5 H9.6 " stroke="#555" stroke-width="1.0"/></svg>
<svg style="position:absolute;left:383.2px;top:107.8px;" width="12" height="11.2" viewBox="0 0 12 11.2" fill="none"><path d="M0 0.6 H11.8 M4.4 3.9 H11.8 M0 7.2 H11.8 M4.4 10.5 H11.8 " stroke="#555" stroke-width="1.0"/></svg>
<div style="position:absolute;left:400.4px;top:104.2px;width:19.4px;height:19px;background:#e9e9e9;border:1.2px solid #9c9c9c;border-radius:4px;box-sizing:border-box;"></div>
<svg style="position:absolute;left:404px;top:107.8px;" width="12" height="11.2" viewBox="0 0 12 11.2" fill="none"><path d="M0 0.6 H11.8 M0 3.9 H11.8 M0 7.2 H11.8 M0 10.5 H11.8 " stroke="#444" stroke-width="1.0"/></svg>
<svg style="position:absolute;left:423.8px;top:106.8px;" width="14" height="13.4" viewBox="0 0 14 13.4" fill="none"><path d="M0.6 0 V13.2 M13.4 0 V13.2" stroke="#5aa2e6" stroke-width="1.1"/><path d="M1.8 2.6 L4.2 0.6 V4.6 Z M12.2 2.6 L9.8 0.6 V4.6 Z" fill="#2b7cd3"/><path d="M4 2.6 H10" stroke="#2b7cd3" stroke-width="1"/><path d="M2.4 6 H11.6 M2.4 8.8 H11.6 M2.4 11.6 H11.6 " stroke="#555" stroke-width="1.0"/></svg>
<div style="position:absolute;left:441.9px;top:104.4px;width:1px;height:18.599999999999994px;background:#dedede;"></div>
<svg style="position:absolute;left:447.3px;top:107px;" width="13.4" height="13" viewBox="0 0 13.4 13" fill="none"><path d="M2.4 0 L4.7 2.9 H0.1 Z M2.4 13 L4.7 10.1 H0.1 Z" fill="#2b7cd3"/><path d="M2.4 2.4 V5.2 M2.4 7.8 V10.6" stroke="#2b7cd3" stroke-width="1.1"/><path d="M6.2 1.6 H13.2 M6.2 4.9 H13.2 M6.2 8.2 H13.2 M6.2 11.5 H13.2 " stroke="#555" stroke-width="1.0"/></svg>
<svg style="position:absolute;left:465.59999999999997px;top:113.10000000000001px;" width="3.2" height="1.6" viewBox="0 0 3.2 1.6" fill="none"><path d="M0 0 L1.6 1.6 L3.2 0" stroke="#444" stroke-width="1.15" stroke-linecap="round" stroke-linejoin="round"/></svg>
<svg style="position:absolute;left:341.3px;top:126.8px;" width="12.8" height="14" viewBox="0 0 12.8 14" fill="none"><path d="M1.5 6.6 L6.5 1.7 L8.9 5.5 L4.8 10.1 Z" fill="#fff" stroke="#555" stroke-width="1.15" stroke-linejoin="round"/><path d="M9.2 3.6 C11 5.2 11.8 7.6 10.7 9.4 C10.4 9.9 9.8 9.6 9.9 9 C10.1 7.6 9.6 6.2 8.9 5.2 Z" fill="#2b7cd3" stroke="#2b7cd3" stroke-width="0.4"/><rect x="0.5" y="11.2" width="11.9" height="2.2" fill="#fff" stroke="#9a9a9a" stroke-width="0.85"/></svg>
<svg style="position:absolute;left:360.79999999999995px;top:134.4px;" width="3.2" height="1.6" viewBox="0 0 3.2 1.6" fill="none"><path d="M0 0 L1.6 1.6 L3.2 0" stroke="#444" stroke-width="1.15" stroke-linecap="round" stroke-linejoin="round"/></svg>
<svg style="position:absolute;left:373.8px;top:128px;" width="12.4" height="12.6" viewBox="0 0 12.4 12.6" fill="none"><path d="M0.5 0.5 H11.9 V11 M0.5 0.5 V11 M6.2 0.5 V11.2 M0.5 5.8 H11.9" stroke="#a8a8a8" stroke-width="0.95"/><path d="M0 11.8 H12.4" stroke="#444" stroke-width="1.2"/></svg>
<svg style="position:absolute;left:393.4px;top:134.4px;" width="3.2" height="1.6" viewBox="0 0 3.2 1.6" fill="none"><path d="M0 0 L1.6 1.6 L3.2 0" stroke="#444" stroke-width="1.15" stroke-linecap="round" stroke-linejoin="round"/></svg>
<div style="position:absolute;left:403.1px;top:125.4px;width:1px;height:18.400000000000006px;background:#dedede;"></div>
<svg style="position:absolute;left:408.5px;top:127.4px;" width="13.6" height="13.6" viewBox="0 0 13.6 13.6" fill="none"><path d="M0.7 13 L6.8 6.2 L12.9 13 M3 10.6 H10.6" stroke="#444" stroke-width="1.15" stroke-linejoin="round"/><path d="M0 3.2 L2.4 1.2 V5.2 Z M13.6 3.2 L11.2 1.2 V5.2 Z" fill="#2b7cd3"/><path d="M2 3.2 H4.2 M9.4 3.2 H11.6" stroke="#2b7cd3" stroke-width="1.1"/></svg>
<svg style="position:absolute;left:427.09999999999997px;top:134.4px;" width="3.2" height="1.6" viewBox="0 0 3.2 1.6" fill="none"><path d="M0 0 L1.6 1.6 L3.2 0" stroke="#444" stroke-width="1.15" stroke-linecap="round" stroke-linejoin="round"/></svg>
<div style="position:absolute;left:439.0px;top:125.4px;width:1px;height:18.400000000000006px;background:#dedede;"></div>
<svg style="position:absolute;left:444.4px;top:127.6px;" width="14" height="14" viewBox="0 0 14 14" fill="none"><text x="0" y="6" font-family="Liberation Sans,sans-serif" font-size="8.2" font-weight="700" fill="#2b7cd3">A</text><text x="0.2" y="13.6" font-family="Liberation Sans,sans-serif" font-size="8" font-weight="700" fill="#444">Z</text><path d="M10.2 0.8 V12.6 M7.4 9.8 L10.2 12.8 L13 9.8" stroke="#444" stroke-width="1.05" stroke-linejoin="round" stroke-linecap="round"/></svg>
<div style="position:absolute;left:465px;top:125.3px;width:19px;height:18.8px;background:#e9e9e9;border:1.2px solid #9c9c9c;border-radius:4px;box-sizing:border-box;"></div>
<svg style="position:absolute;left:468.4px;top:128.8px;" width="12.4" height="12" viewBox="0 0 12.4 12" fill="none"><path d="M11.6 0.6 V4.2 H5.2 M7 2.4 L5 4.2 L7 6" stroke="#444" stroke-width="0.95" stroke-linejoin="round" stroke-linecap="round"/><path d="M0.6 8.6 H6.6 M4.8 6.8 L6.8 8.6 L4.8 10.4" stroke="#444" stroke-width="0.95" stroke-linejoin="round" stroke-linecap="round"/></svg>
<svg style="position:absolute;left:481.3px;top:149.8px;" width="6.4" height="6.4" viewBox="0 0 6.4 6.4" fill="none"><path d="M0.45 4.4 V0.45 H4.4" stroke="#505050" stroke-width="0.9"/><path d="M2.3 2.3 L4.6 4.6" stroke="#505050" stroke-width="1"/><path d="M6.2 2.9 V6.2 H2.9 Z" fill="#505050"/></svg>
<div style="position:absolute;left:489.8px;top:84px;width:1px;height:71.6px;background:#dedede;"></div>
<svg style="position:absolute;left:503px;top:87px;" width="24.4" height="25" viewBox="0 0 24.4 25" fill="none"><text x="0.2" y="20.2" font-family="Liberation Sans,sans-serif" font-size="25.5" fill="#3c3c3c" stroke="#fff" stroke-width="0.7">A</text><path d="M22.6 7.4 L14.8 17.2" stroke="#5a5a5a" stroke-width="2.7" stroke-linecap="round"/><path d="M22.5 7.5 L15.2 16.7" stroke="#fff" stroke-width="0.9" stroke-linecap="round"/><path d="M14.8 17 C12.6 16.4 10.6 17.8 10.2 19.6 C9.9 21 8.6 21.4 7.6 21.6 C10.6 23.8 15 23.4 16.2 20 C16.6 18.8 16 17.6 14.8 17 Z" fill="#3d8fe0" stroke="#2b7cd3" stroke-width="0.6"/></svg>
<svg style="position:absolute;left:513.4px;top:130.79999999999998px;" width="3.2" height="1.6" viewBox="0 0 3.2 1.6" fill="none"><path d="M0 0 L1.6 1.6 L3.2 0" stroke="#444" stroke-width="1.15" stroke-linecap="round" stroke-linejoin="round"/></svg>
<svg style="position:absolute;left:528.6px;top:149.8px;" width="6.4" height="6.4" viewBox="0 0 6.4 6.4" fill="none"><path d="M0.45 4.4 V0.45 H4.4" stroke="#505050" stroke-width="0.9"/><path d="M2.3 2.3 L4.6 4.6" stroke="#505050" stroke-width="1"/><path d="M6.2 2.9 V6.2 H2.9 Z" fill="#505050"/></svg>
<div style="position:absolute;left:537.1px;top:84px;width:1px;height:71.6px;background:#dedede;"></div>
<svg style="position:absolute;left:547.4px;top:85px;" width="24" height="24.4" viewBox="0 0 24 24.4" fill="none"><circle cx="15.4" cy="8.6" r="7.9" stroke="#5a5a5a" stroke-width="1.15"/><path d="M9.8 14.4 L0.8 23.6" stroke="#5a5a5a" stroke-width="1.25" stroke-linecap="round"/></svg>
<svg style="position:absolute;left:559.1px;top:129.6px;" width="3.2" height="1.6" viewBox="0 0 3.2 1.6" fill="none"><path d="M0 0 L1.6 1.6 L3.2 0" stroke="#444" stroke-width="1.15" stroke-linecap="round" stroke-linejoin="round"/></svg>
<div style="position:absolute;left:580.8px;top:84px;width:1px;height:71.6px;background:#dedede;"></div>
<svg style="position:absolute;left:603.6px;top:86.8px;" width="22" height="22.6" viewBox="0 0 22 22.6" fill="none"><path d="M11.4 18.4 H2.6 a1.8 1.8 0 0 1 -1.8 -1.8 V2.6 a1.8 1.8 0 0 1 1.8 -1.8 H10.6 L15.6 5.8 V10" stroke="#4d84e8" stroke-width="1.1" stroke-linejoin="round"/><path d="M4 12.6 C6.4 11 8 7.6 8 5.4 C8 4 6.6 4 6.6 5.4 C6.6 7.8 9.4 10.6 12.4 10.6 C13.8 10.6 13.6 9.2 12 9.4 C9.4 9.6 6 11 4 12.6 Z" stroke="#4d84e8" stroke-width="0.85" stroke-linejoin="round"/><rect x="9.2" y="15.2" width="7.6" height="4.6" rx="2.3" transform="rotate(-45 13 17.5)" stroke="#4d84e8" stroke-width="1.1"/><rect x="13.6" y="10.8" width="7.6" height="4.6" rx="2.3" transform="rotate(-45 17.4 13.1)" stroke="#4d84e8" stroke-width="1.1" fill="#fff"/></svg>
<svg style="position:absolute;left:629.0px;top:130.2px;" width="3.2" height="1.6" viewBox="0 0 3.2 1.6" fill="none"><path d="M0 0 L1.6 1.6 L3.2 0" stroke="#444" stroke-width="1.15" stroke-linecap="round" stroke-linejoin="round"/></svg>
<div style="position:absolute;left:640.9px;top:84px;width:1px;height:71.6px;background:#dedede;"></div>
<svg style="position:absolute;left:660px;top:86px;" width="16" height="24.6" viewBox="0 0 16 24.6" fill="none"><rect x="4" y="0.6" width="8" height="14.6" rx="4" fill="#7fb8ee" stroke="#2d76cc" stroke-width="1.1"/><path d="M0.8 10.6 V11.6 a7.2 7.2 0 0 0 14.4 0 V10.6 M8 18.8 V24" stroke="#555" stroke-width="1.15" stroke-linecap="round"/></svg>
<svg style="position:absolute;left:677.6999999999999px;top:132.0px;" width="3.2" height="1.6" viewBox="0 0 3.2 1.6" fill="none"><path d="M0 0 L1.6 1.6 L3.2 0" stroke="#444" stroke-width="1.15" stroke-linecap="round" stroke-linejoin="round"/></svg>
<div style="position:absolute;left:692.9px;top:84px;width:1px;height:71.6px;background:#dedede;"></div>
<svg style="position:absolute;left:704.4px;top:86px;" width="26" height="24.8" viewBox="0 0 26 24.8" fill="none"><path d="M12.6 1.6 L16.2 0.8 L18.6 2.4 L6.6 20.6 L0.8 23.6 L1.4 17.4 Z" stroke="#1f5fc4" stroke-width="1.5" stroke-linejoin="round"/><path d="M15.4 7.6 H24.6 M12.6 12.6 H22 M9.6 17.6 H19" stroke="#1f5fc4" stroke-width="2.6" stroke-linecap="round"/><path d="M1 23.4 L1.5 19.4 L4.6 21.6 Z" fill="#1f5fc4"/></svg>
<div style="position:absolute;left:738.7px;top:84px;width:1px;height:71.6px;background:#dedede;"></div>
<svg style="position:absolute;left:752.4px;top:87px;" width="23" height="23.2" viewBox="0 0 23 23.2" fill="none"><rect x="0.6" y="0.6" width="21.6" height="22" rx="1" fill="#fdf1ec" stroke="#e9805a" stroke-width="1.2"/><rect x="3.4" y="3.4" width="7.2" height="7.2" fill="#fff" stroke="#e9805a" stroke-width="1.05"/><rect x="3.4" y="12.6" width="7.2" height="7.2" fill="#fff" stroke="#e9805a" stroke-width="1.05"/><rect x="12.2" y="3.4" width="7.2" height="7.2" fill="#fff" stroke="#e9805a" stroke-width="1.05"/><rect x="12.2" y="12.6" width="7.2" height="7.2" fill="#fff" stroke="#e9805a" stroke-width="1.05"/></svg>
<div style="position:absolute;left:786.3px;top:84px;width:1px;height:71.6px;background:#dedede;"></div>
<svg style="position:absolute;left:805.6px;top:87px;" width="24" height="23" viewBox="0 0 24 23" fill="none"><rect x="0.6" y="1.2" width="12.4" height="15.8" fill="#fff" stroke="#6e6e6e" stroke-width="1.05"/><path d="M2.6 4 H11 M2.6 6.4 H11 M2.6 8.8 H11 M2.6 11.2 H11 M2.6 13.6 H11" stroke="#9a9a9a" stroke-width="0.85"/><rect x="13.4" y="10.4" width="9.4" height="12" fill="#fff" stroke="#555" stroke-width="1.05"/><path d="M15.2 13.2 H21 M15.2 15.4 H21 M15.2 17.6 H21 M15.2 19.8 H21" stroke="#777" stroke-width="0.85"/><path d="M10.6 2.2 C14.6 -0.6 19.6 1.6 19.4 7.6 M16.6 5.4 L19.4 8.2 L22 5.4" stroke="#2b8fe0" stroke-width="1.15" stroke-linecap="round" stroke-linejoin="round"/></svg>
<div style="position:absolute;left:847.1px;top:84px;width:1px;height:71.6px;background:#dedede;"></div>
<svg style="position:absolute;left:984.6px;top:148.7px;" width="6" height="3" viewBox="0 0 6 3" fill="none"><path d="M0 0 L3.0 3 L6 0" stroke="#444" stroke-width="1.1" stroke-linecap="round" stroke-linejoin="round"/></svg>
<svg style="position:absolute;left:25.6px;top:169.6px;" width="5" height="5" viewBox="0 0 5 5" fill="none"><path d="M0.7 0 V4.2 H5" stroke="#505050" stroke-width="1.45"/></svg>
<svg style="position:absolute;left:0px;top:169.2px;" width="1024" height="4.8" viewBox="0 0 1024 4.8" fill="none"><path d="M73.30 0 V4.8 M81.10 0 V4.8 M88.90 0 V4.8 M96.70 0 V4.8 M104.50 0 V4.8 M112.30 0 V4.8 M120.10 0 V4.8 M127.90 0 V4.8 M135.70 0 V4.8 M143.50 0 V4.8 M151.30 0 V4.8 M159.10 0 V4.8 M166.90 0 V4.8 M174.70 0 V4.8 M182.50 0 V4.8 M190.30 0 V4.8 M840.10 0 V4.8 M847.90 0 V4.8 M855.70 0 V4.8 M863.50 0 V4.8 M871.30 0 V4.8 M879.10 0 V4.8 M886.90 0 V4.8 M894.70 0 V4.8 M902.50 0 V4.8 M910.30 0 V4.8 M918.10 0 V4.8 M925.90 0 V4.8 M933.70 0 V4.8 M941.50 0 V4.8 M949.30 0 V4.8 M957.10 0 V4.8 M206.57 0 V4.8 M222.19 0 V4.8 M237.81 0 V4.8 M253.43 0 V4.8 M269.05 0 V4.8 M284.67 0 V4.8 M300.29 0 V4.8 M315.91 0 V4.8 M331.53 0 V4.8 M347.15 0 V4.8 M362.77 0 V4.8 M378.39 0 V4.8 M394.01 0 V4.8 M409.63 0 V4.8 M425.25 0 V4.8 M440.87 0 V4.8 M456.49 0 V4.8 M472.11 0 V4.8 M487.73 0 V4.8 M503.35 0 V4.8 M518.97 0 V4.8 M534.59 0 V4.8 M550.21 0 V4.8 M565.83 0 V4.8 M581.45 0 V4.8 M597.07 0 V4.8 M612.69 0 V4.8 M628.31 0 V4.8 M643.93 0 V4.8 M659.55 0 V4.8 M675.17 0 V4.8 M690.79 0 V4.8 M706.41 0 V4.8 M722.03 0 V4.8 M737.65 0 V4.8 M753.27 0 V4.8 M768.89 0 V4.8 M784.51 0 V4.8 M800.13 0 V4.8 M815.75 0 V4.8" stroke="#747474" stroke-width="1.05"/></svg>
<span class="t" style="left:228.05px;top:167.50px;font-size:7.8px;color:#4e4e4e;font-weight:500;transform:scaleX(0.8978);">2</span>
<span class="t" style="left:259.29px;top:167.50px;font-size:7.8px;color:#4e4e4e;font-weight:500;transform:scaleX(0.8978);">4</span>
<span class="t" style="left:290.53px;top:167.50px;font-size:7.8px;color:#4e4e4e;font-weight:500;transform:scaleX(0.8978);">6</span>
<span class="t" style="left:321.77px;top:167.50px;font-size:7.8px;color:#4e4e4e;font-weight:500;transform:scaleX(0.8978);">8</span>
<span class="t" style="left:351.06px;top:167.50px;font-size:7.8px;color:#4e4e4e;font-weight:500;transform:scaleX(0.8978);">10</span>
<span class="t" style="left:382.3px;top:167.50px;font-size:7.8px;color:#4e4e4e;font-weight:500;transform:scaleX(0.8978);">12</span>
<span class="t" style="left:413.54px;top:167.50px;font-size:7.8px;color:#4e4e4e;font-weight:500;transform:scaleX(0.8978);">14</span>
<span class="t" style="left:444.78px;top:167.50px;font-size:7.8px;color:#4e4e4e;font-weight:500;transform:scaleX(0.8978);">16</span>
<span class="t" style="left:476.02px;top:167.50px;font-size:7.8px;color:#4e4e4e;font-weight:500;transform:scaleX(0.8978);">18</span>
<span class="t" style="left:507.26px;top:167.50px;font-size:7.8px;color:#4e4e4e;font-weight:500;transform:scaleX(0.8978);">20</span>
<span class="t" style="left:538.5px;top:167.50px;font-size:7.8px;color:#4e4e4e;font-weight:500;transform:scaleX(0.8978);">22</span>
<span class="t" style="left:569.74px;top:167.50px;font-size:7.8px;color:#4e4e4e;font-weight:500;transform:scaleX(0.8978);">24</span>
<span class="t" style="left:600.98px;top:167.50px;font-size:7.8px;color:#4e4e4e;font-weight:500;transform:scaleX(0.8978);">26</span>
<span class="t" style="left:632.22px;top:167.50px;font-size:7.8px;color:#4e4e4e;font-weight:500;transform:scaleX(0.8978);">28</span>
<span class="t" style="left:663.46px;top:167.50px;font-size:7.8px;color:#4e4e4e;font-weight:500;transform:scaleX(0.8978);">30</span>
<span class="t" style="left:694.7px;top:167.50px;font-size:7.8px;color:#4e4e4e;font-weight:500;transform:scaleX(0.8978);">32</span>
<span class="t" style="left:725.94px;top:167.50px;font-size:7.8px;color:#4e4e4e;font-weight:500;transform:scaleX(0.8978);">34</span>
<span class="t" style="left:757.18px;top:167.50px;font-size:7.8px;color:#4e4e4e;font-weight:500;transform:scaleX(0.8978);">36</span>
<span class="t" style="left:788.42px;top:167.50px;font-size:7.8px;color:#4e4e4e;font-weight:500;transform:scaleX(0.8978);">38</span>
<span class="t" style="left:819.66px;top:167.50px;font-size:7.8px;color:#4e4e4e;font-weight:500;transform:scaleX(0.8978);">40</span>
<svg style="position:absolute;left:194px;top:162.2px;" width="10" height="20" viewBox="0 0 10 20" fill="none"><path d="M0.5 0.5 H9.5 V2.6 L5 5.6 L0.5 2.6 Z" fill="#fff" stroke="#8c8c8c" stroke-width="0.85" stroke-linejoin="round"/><path d="M0.5 12 L5 9.2 L9.5 12 V19.4 H0.5 Z M0.5 14.7 H9.5" fill="#fff" stroke="#8c8c8c" stroke-width="0.85" stroke-linejoin="round"/></svg>
<svg style="position:absolute;left:826.9px;top:170.8px;" width="10" height="7" viewBox="0 0 10 7" fill="none"><path d="M0.5 6.5 V3.6 L5 0.5 L9.5 3.6 V6.5 Z" fill="#fff" stroke="#8c8c8c" stroke-width="0.85" stroke-linejoin="round"/></svg>
<svg style="position:absolute;left:26.6px;top:0px;" width="4.6" height="576" viewBox="0 0 4.6 576" fill="none"><path d="M0 191.30 H4.6 M0 204.73 H4.6 M0 218.16 H4.6 M0 231.59 H4.6 M0 245.02 H4.6 M0 258.45 H4.6 M0 271.88 H4.6 M0 285.31 H4.6 M0 298.74 H4.6 M0 312.17 H4.6 M0 338.85 H4.6 M0 365.95 H4.6 M0 393.05 H4.6 M0 420.15 H4.6 M0 447.25 H4.6 M0 474.35 H4.6 M0 501.45 H4.6 M0 528.55 H4.6" stroke="#747474" stroke-width="0.95"/></svg>
<span class="t" style="left:26.8px;top:348.70px;font-size:7.4px;color:#5a5a5a;transform-origin:50% 50%;rotate:-90deg;">1</span>
<span class="t" style="left:26.8px;top:375.80px;font-size:7.4px;color:#5a5a5a;transform-origin:50% 50%;rotate:-90deg;">2</span>
<span class="t" style="left:26.8px;top:402.90px;font-size:7.4px;color:#5a5a5a;transform-origin:50% 50%;rotate:-90deg;">3</span>
<span class="t" style="left:26.8px;top:430.00px;font-size:7.4px;color:#5a5a5a;transform-origin:50% 50%;rotate:-90deg;">4</span>
<span class="t" style="left:26.8px;top:457.10px;font-size:7.4px;color:#5a5a5a;transform-origin:50% 50%;rotate:-90deg;">5</span>
<span class="t" style="left:26.8px;top:484.20px;font-size:7.4px;color:#5a5a5a;transform-origin:50% 50%;rotate:-90deg;">6</span>
<span class="t" style="left:26.8px;top:511.30px;font-size:7.4px;color:#5a5a5a;transform-origin:50% 50%;rotate:-90deg;">7</span>
<span class="t" style="left:26.8px;top:538.40px;font-size:7.4px;color:#5a5a5a;transform-origin:50% 50%;rotate:-90deg;">8</span>
<svg style="position:absolute;left:172.8px;top:298.8px;" width="27" height="27" viewBox="0 0 27 27" fill="none"><path d="M26 0 V26.1 H0" stroke="#cbcbcb" stroke-width="1.3"/></svg>
<svg style="position:absolute;left:833.2px;top:298.8px;" width="27" height="27" viewBox="0 0 27 27" fill="none"><path d="M0.7 0 V26.1 H26.7" stroke="#cbcbcb" stroke-width="1.3"/></svg>
<div style="position:absolute;left:285.1px;top:326px;width:23.8px;height:53.2px;background:#c8c8c8;"></div>
<svg style="position:absolute;left:0px;top:0px;z-index:2;" width="1024" height="576" viewBox="0 0 1024 576" fill="none"><rect x="277" y="317.5" width="8.50" height="4.30" fill="#f90a0a"/><rect x="290.2" y="317.5" width="14.60" height="4.30" fill="#f90a0a"/><rect x="309.8" y="317.5" width="8.00" height="4.30" fill="#f90a0a"/><rect x="277" y="383.3" width="12.90" height="4.50" fill="#f90a0a"/><rect x="295.2" y="383.3" width="14.60" height="4.50" fill="#f90a0a"/><rect x="313.2" y="383.3" width="4.60" height="4.50" fill="#f90a0a"/><rect x="277" y="317.5" width="4.50" height="10.20" fill="#f90a0a"/><rect x="277" y="333" width="4.50" height="13.80" fill="#f90a0a"/><rect x="277" y="352" width="4.50" height="13.70" fill="#f90a0a"/><rect x="277" y="371.1" width="4.50" height="16.70" fill="#f90a0a"/><rect x="313.3" y="317.5" width="4.50" height="10.90" fill="#f90a0a"/><rect x="313.3" y="333.9" width="4.50" height="13.80" fill="#f90a0a"/><rect x="313.3" y="352.8" width="4.50" height="13.60" fill="#f90a0a"/><rect x="313.3" y="371.9" width="4.50" height="15.90" fill="#f90a0a"/></svg>
<span class="t" style="left:286px;top:344.80px;font-size:18.4px;color:#222;transform:scaleX(0.8989);font-feature-settings:normal;font-family:'Liberation Sans',sans-serif;">3</span>
<span class="t" style="left:301.9px;top:338.30px;font-size:12.8px;color:#222;font-weight:700;transform:scaleX(0.7719);font-feature-settings:normal;font-family:'Liberation Sans',sans-serif;">1</span>
<span class="t" style="left:301.4px;top:360.20px;font-size:12.8px;color:#222;font-weight:700;transform:scaleX(0.9263);font-feature-settings:normal;font-family:'Liberation Sans',sans-serif;">2</span>
<div style="position:absolute;left:300.6px;top:354.2px;width:7.8px;height:1.3px;background:#222;"></div>
<svg style="position:absolute;left:473.4px;top:351px;" width="9.4" height="7.8" viewBox="0 0 9.4 7.8" fill="none"><path d="M8.8 0.4 V4.6 H1 M3.6 2 L0.8 4.6 L3.6 7.2" stroke="#8c8c8c" stroke-width="0.95" stroke-linejoin="round"/></svg>
<svg style="position:absolute;left:144.2px;top:544.4px;" width="11" height="10.8" viewBox="0 0 11 10.8" fill="none"><path d="M4.9 0.9 V9.4 M4.9 0.9 H1.3 a0.8 0.8 0 0 0 -0.8 0.8 V8.6 a0.8 0.8 0 0 0 0.8 0.8 H4.9 M4.9 0.9 H9.4 a0.8 0.8 0 0 1 0.8 0.8 V5.6" stroke="#4a4a4a" stroke-width="1.1"/><path d="M5.9 8.3 L7.4 9.8 L10.5 6.6" stroke="#4a4a4a" stroke-width="1.1" stroke-linejoin="round" stroke-linecap="round"/></svg>
<svg style="position:absolute;left:363.4px;top:544.8px;" width="11.6" height="10" viewBox="0 0 11.6 10" fill="none"><rect x="0.5" y="0.5" width="10.6" height="9" rx="0.6" stroke="#4a4a4a" stroke-width="1"/><rect x="0.5" y="0.5" width="10.6" height="2.3" fill="#4a4a4a"/><path d="M1.9 5 H4.4 M1.9 7 H3.8" stroke="#4a4a4a" stroke-width="0.9"/><circle cx="7.6" cy="6.4" r="2.3" fill="#f3f3f3" stroke="#4a4a4a" stroke-width="0.95"/><circle cx="7.6" cy="6.4" r="1.05" fill="#4a4a4a"/></svg>
<svg style="position:absolute;left:389.4px;top:544.4px;" width="11.4" height="11.2" viewBox="0 0 11.4 11.2" fill="none"><circle cx="4.4" cy="1.7" r="1.25" stroke="#4a4a4a" stroke-width="1"/><path d="M0.7 4.4 C2 3.5 3.4 4 4.4 4 C5.4 4 6.8 3.5 8.1 4.4 M4.4 4 V6.8 L2.2 10.6 M4.4 6.8 L5.3 8.2" stroke="#4a4a4a" stroke-width="1.15" stroke-linecap="round" stroke-linejoin="round"/><path d="M5.8 8.7 L7.3 10.2 L10.7 5.2" stroke="#4a4a4a" stroke-width="1.15" stroke-linecap="round" stroke-linejoin="round"/></svg>
<svg style="position:absolute;left:692.8px;top:544.2px;" width="12.4" height="11.4" viewBox="0 0 12.4 11.4" fill="none"><path d="M0.5 2.6 V0.5 H2.6 M9.8 0.5 H11.9 V2.6 M0.5 8.8 V10.9 H2.6 M9.8 10.9 H11.9 V8.8" stroke="#4a4a4a" stroke-width="0.85"/><path d="M3.6 2.6 H7 L8.8 4.4 V8.8 H3.6 Z M6.8 2.8 V4.6 H8.6" stroke="#4a4a4a" stroke-width="0.85" stroke-linejoin="round"/></svg>
<svg style="position:absolute;left:761.2px;top:543.9px;" width="11.8" height="10.4" viewBox="0 0 11.8 10.4" fill="none"><path d="M5.9 1.2 V9.6 M0.5 0.8 H4.6 a1.3 1.3 0 0 1 1.3 1 a1.3 1.3 0 0 1 1.3 -1 H11.3 V9 H7.2 a1.3 1.3 0 0 0 -1.3 0.8 a1.3 1.3 0 0 0 -1.3 -0.8 H0.5 Z" stroke="#4a4a4a" stroke-width="0.85" stroke-linejoin="round"/><path d="M2 3 H4.4 M2 4.8 H4.4 M2 6.6 H4.4 M7.4 3 H9.8 M7.4 4.8 H9.8 M7.4 6.6 H9.8" stroke="#4a4a4a" stroke-width="0.7"/></svg>
<svg style="position:absolute;left:795.4px;top:544.2px;" width="8.8" height="11.2" viewBox="0 0 8.8 11.2" fill="none"><rect x="0.5" y="0.5" width="7.8" height="10.2" stroke="#4a4a4a" stroke-width="0.9"/><path d="M2 2.8 H6.8 M2 4.6 H6.8 M2 6.4 H6.8 M2 8.2 H6.8" stroke="#4a4a4a" stroke-width="0.75"/></svg>
<svg style="position:absolute;left:826.6px;top:544.4px;" width="12" height="11.4" viewBox="0 0 12 11.4" fill="none"><rect x="0.5" y="0.5" width="9.4" height="9.6" stroke="#4a4a4a" stroke-width="0.9"/><path d="M0.5 2.6 H9.9 M2 4.4 H5 M2 6 H4.4" stroke="#4a4a4a" stroke-width="0.75"/><circle cx="8.4" cy="8" r="3" fill="#4a4a4a"/><path d="M5.6 8 H11.2 M8.4 5.2 V10.8" stroke="#f3f3f3" stroke-width="0.5"/></svg>
<svg style="position:absolute;left:852.4px;top:545px;" width="102" height="10" viewBox="0 0 102 10" fill="none"><path d="M0.2 5 H5.6 M94.6 5 H101 M97.8 1.9 V8.1" stroke="#4a4a4a" stroke-width="0.95"/><path d="M10.6 5 H90.4" stroke="#7a7a7a" stroke-width="0.85"/><path d="M50.6 2.6 V7.4" stroke="#7a7a7a" stroke-width="0.9"/><rect x="53.4" y="0.6" width="3.4" height="8.8" fill="#4a4a4a"/></svg>
</div></div></body></html>
